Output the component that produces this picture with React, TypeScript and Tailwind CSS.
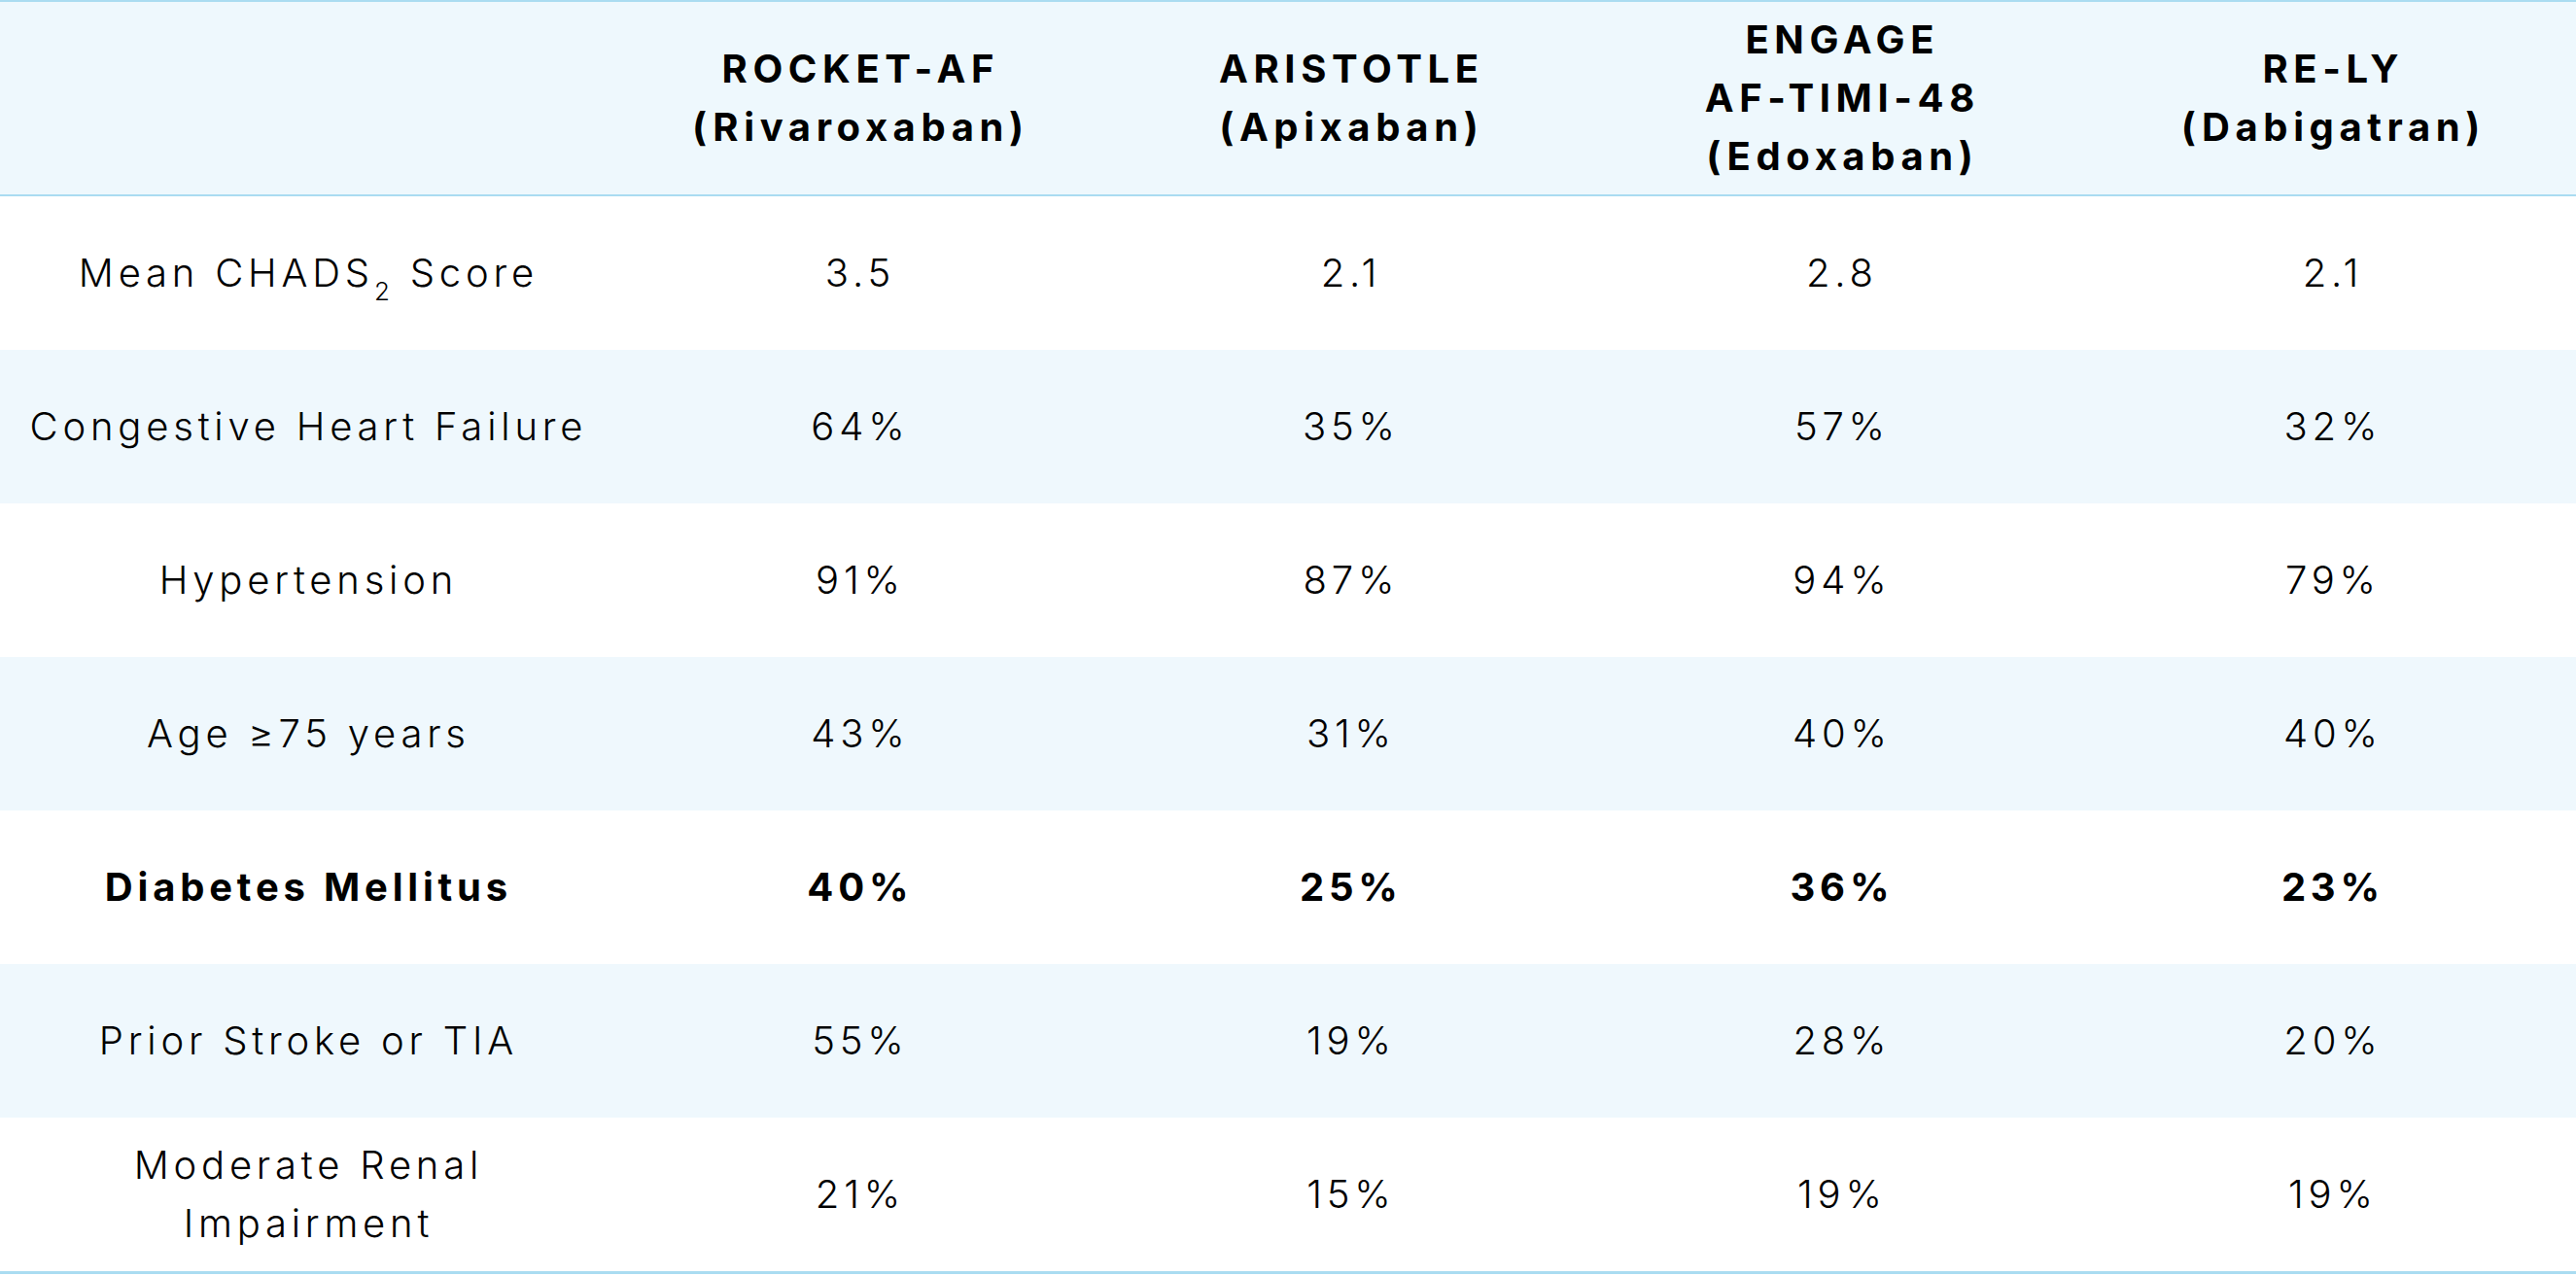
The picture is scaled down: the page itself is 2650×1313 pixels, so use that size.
import React from "react";

const headers: string[][] = [
  ["ROCKET-AF", "(Rivaroxaban)"],
  ["ARISTOTLE", "(Apixaban)"],
  ["ENGAGE", "AF-TIMI-48", "(Edoxaban)"],
  ["RE-LY", "(Dabigatran)"],
];

type Row = { label: React.ReactNode; values: string[]; bold?: boolean };

const rows: Row[] = [
  {
    label: (
      <>
        Mean CHADS<sub className="text-[26px] align-[-0.3em] leading-none">2</sub> Score
      </>
    ),
    values: ["3.5", "2.1", "2.8", "2.1"],
  },
  { label: "Congestive Heart Failure", values: ["64%", "35%", "57%", "32%"] },
  { label: "Hypertension", values: ["91%", "87%", "94%", "79%"] },
  { label: "Age ≥75 years", values: ["43%", "31%", "40%", "40%"] },
  { label: "Diabetes Mellitus", values: ["40%", "25%", "36%", "23%"], bold: true },
  { label: "Prior Stroke or TIA", values: ["55%", "19%", "28%", "20%"] },
  {
    label: (
      <>
        Moderate Renal
        <br />
        Impairment
      </>
    ),
    values: ["21%", "15%", "19%", "19%"],
  },
];

export default function App() {
  return (
    <div
      className="w-[2650px] h-[1313px] bg-white text-black"
      style={{ fontFamily: "Inter, 'Noto Sans', sans-serif" }}
    >
      <div className="grid grid-cols-[630px_repeat(4,1fr)] bg-[#eef8fd] border-t-2 border-b-2 border-[#aadcf1] h-[202px]">
        <div />
        {headers.map((h, i) => (
          <div
            key={i}
            className="flex flex-col items-center justify-center text-center font-bold text-[40px] leading-[60px] tracking-[0.14em]"
          >
            {h.map((line, j) => (
              <span key={j} className="mr-[-0.14em]">{line}</span>
            ))}
          </div>
        ))}
      </div>
      <div className="border-b-[3px] border-[#aadcf1]">
        {rows.map((r, i) => (
          <div
            key={i}
            className={
              "grid grid-cols-[630px_repeat(4,1fr)] h-[158px] text-[40px] leading-[60px] " +
              (i % 2 === 1 ? "bg-[#eff8fd] " : "bg-white ") +
              (r.bold ? "font-bold tracking-[0.12em]" : "font-light tracking-[0.12em]")
            }
          >
            <div className="flex items-center justify-center text-center">
              <span className="mr-[-0.12em]">{r.label}</span>
            </div>
            {r.values.map((v, j) => (
              <div key={j} className="flex items-center justify-center text-center">
                <span className="mr-[-0.12em]">{v}</span>
              </div>
            ))}
          </div>
        ))}
      </div>
    </div>
  );
}
